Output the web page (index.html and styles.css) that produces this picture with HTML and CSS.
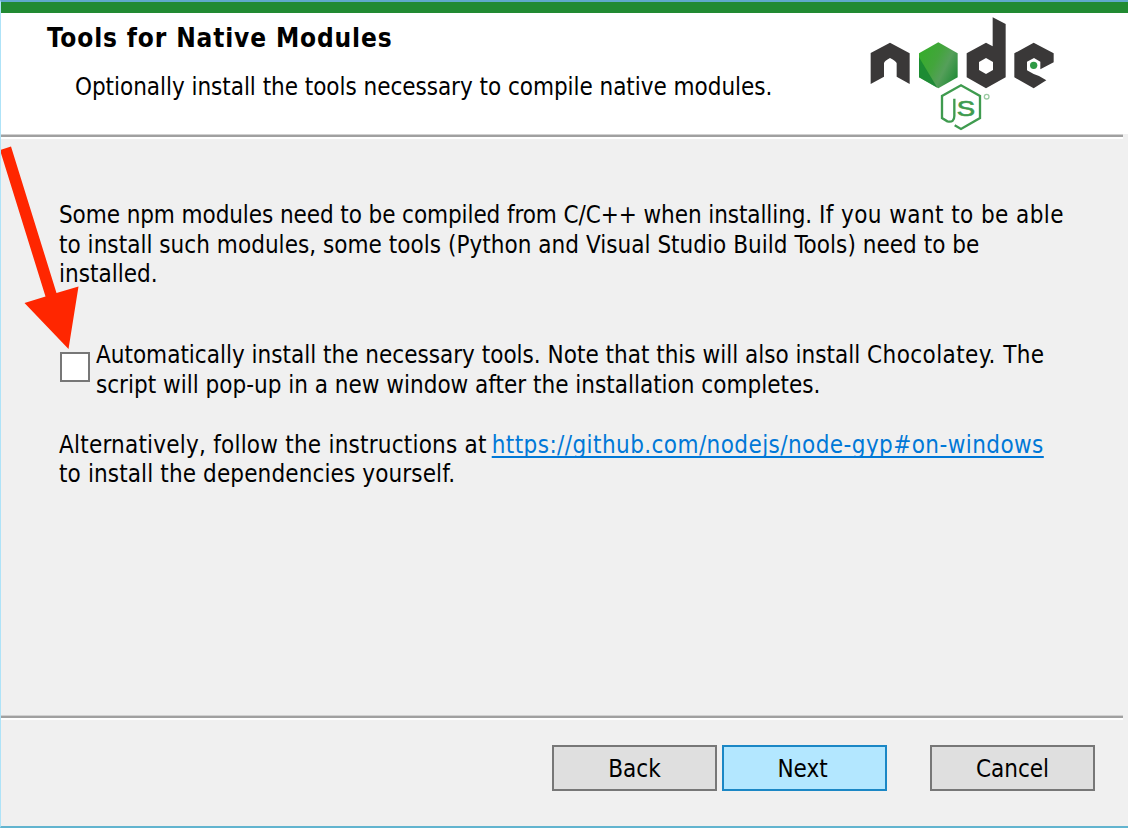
FILE: index.html
```
<!DOCTYPE html>
<html lang="en">
<head>
<meta charset="utf-8">
<title>Node.js Setup</title>
<link rel="stylesheet" href="styles.css">
</head>
<body>
<main class="dialog">
  <header class="header">
    <div class="headings">
      <h1 class="title">Tools for Native Modules</h1>
      <p class="subtitle">Optionally install the tools necessary to compile native modules.</p>
    </div>
    <svg class="logo" viewBox="21 42 570 351" role="img" aria-label="node js">
      <defs>
        <linearGradient id="leaf" x1="0" y1="0.2" x2="1" y2="0.8">
          <stop offset="0" stop-color="#35ad2a"/><stop offset=".4" stop-color="#43a53c"/><stop offset=".65" stop-color="#559f5a"/><stop offset="1" stop-color="#1f8a35"/>
        </linearGradient>
      </defs>
      <g fill="#3a3838">
        <path d="M32 252V159L90 128L149 160V252L110 230V190Q109 184 90 174Q73 183 72 190V230Z"/>
        <path fill-rule="evenodd" d="M378 128L398 139V52L437 72V232L378 265L320 232V160ZM378 174L357 186V210L378 222L399 210V186Z"/>
        <path d="M521 128L581 160V187L541 208V185L522 174L501 185V211L521 222L537 228L559 241L521 265L463 232V160Z"/>
      </g>
      <path fill="url(#leaf)" d="M235 127L293 160V232L235 265L177 232V160Z"/>
      <path fill="#148432" d="M177 172L232 263L177 232Z" opacity=".8"/>
      <circle cx="521" cy="196" r="11" fill="#2e9a45"/>
      <path fill="none" stroke="#3f9b4f" stroke-width="7" d="M284 376L303 387L360 354V288L303 256L246 288V354L262 364Q283 369 283 348V296"/>
      <text class="logo-s" x="290" y="347" textLength="55" lengthAdjust="spacingAndGlyphs">S</text>
      <circle cx="380" cy="290" r="7" fill="none" stroke="#9bcaa3" stroke-width="4"/>
    </svg>
  </header>
  <div class="rule"></div>

  <section class="content">
    <p class="para">
      <span class="line tight">Some npm modules need to be compiled from C/C++ when installing. <span class="wide">If you want to be able</span></span>
      <span class="line snug">to install such modules, some tools (Python and Visual Studio Build Tools) need to be</span>
      <span class="line">installed.</span>
    </p>
    <label class="option">
      <input class="box" type="checkbox">
      <span class="para">
        <span class="line">Automatically install the necessary tools. Note that this will also install <span class="wide">Chocolatey. The</span></span>
        <span class="line">script will pop-up in a new window after the installation completes.</span>
      </span>
    </label>
    <p class="para alt">
      <span class="line"><span class="lead">Alternatively, follow the instructions at</span><a class="link" href="#">https://github.com/nodejs/node-gyp#on-windows</a></span>
      <span class="line note">to install the dependencies yourself.</span>
    </p>
  </section>

  <div class="rule"></div>
  <footer class="footer">
    <button class="button">Back</button>
    <button class="button primary">Next</button>
    <button class="button cancel">Cancel</button>
  </footer>

  <svg class="arrow" viewBox="0 0 90 210" aria-hidden="true">
    <path fill="#ff2600" d="M0 10L11 6.500L56.500 153L78.500 146.500L68.500 209L24.500 163L45.500 156.500Z"/>
  </svg>
</main>
</body>
</html>
```
FILE: styles.css
```
* { box-sizing: border-box; }
body { margin: 0; font-family: "DejaVu Sans Condensed", "Noto Sans", sans-serif; font-size: 24px; color: #000; }
h1, p { margin: 0; }
.dialog { position: relative; display: flex; flex-direction: column; width: 1128px; height: 828px; overflow: hidden; background: #f0f0f0; border-top: 2px solid #60a9cb; border-left: 1px solid #aee3f8; border-bottom: 2px solid #62b4cf; }
.header { display: flex; justify-content: space-between; height: 132px; padding: 0 71px 0 46px; background: #fff; border-top: 11px solid #218a32; }
.headings { padding-top: 8px; }
.title { font-size: 26px; line-height: 34px; font-weight: 700; letter-spacing: 0.85px; white-space: nowrap; }
.subtitle { padding: 17px 0 0 28px; line-height: 30px; letter-spacing: -0.04px; white-space: nowrap; }
.logo { width: 190px; height: 117px; margin-top: 1px; overflow: visible; }
.logo-s { font: 66px "Liberation Sans", sans-serif; fill: #3f9b4f; stroke: #3f9b4f; stroke-width: 2px; }
.rule { height: 5px; margin-right: 5px; background: linear-gradient(#d0d0d0 0 1px, #a0a0a0 1px 3px, #fff 3px); flex: none; }
.line { display: block; white-space: nowrap; }
.content { flex: 1; padding: 62px 0 0 58px; }
.para { line-height: 29.7px; }
.tight { letter-spacing: -0.09px; }
.wide { letter-spacing: 0.42px; }
.snug { letter-spacing: 0.03px; }
.note { letter-spacing: 0.12px; }
.option { display: flex; gap: 6px; margin-top: 51px; }
.box { appearance: none; width: 30px; height: 30px; margin: 11px 0 0 1px; background: #fff; border: 2px solid #777; }
.alt { margin-top: 30px; }
.lead { margin-right: 5px; letter-spacing: 0.22px; }
.link { color: #0078d7; letter-spacing: 0.42px; text-decoration-thickness: 2px; text-underline-offset: 3px; text-decoration-skip-ink: none; }
.footer { display: flex; height: 106px; padding: 25px 33px 0 0; justify-content: flex-end; }
.button { width: 165px; height: 46px; margin: 0 0 0 5px; padding: 2px 0 0; font: inherit; color: #000; background: #dfdfdf; border: 2px solid #777; }
.primary { background: #b3e7ff; border-color: #1b87c5; padding-right: 4px; }
.cancel { margin-left: 43px; }
.arrow { position: absolute; left: -1px; top: 138px; width: 90px; height: 210px; }
```
